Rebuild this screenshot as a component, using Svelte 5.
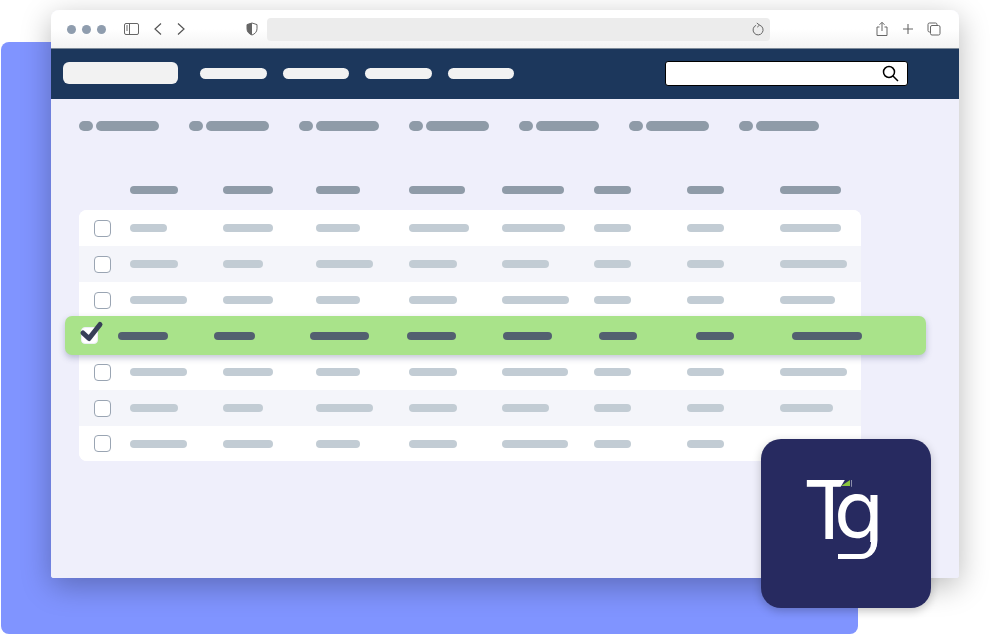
<script lang="ts">
  const navLinks = [0, 1, 2, 3];
  const tabs = [0, 1, 2, 3, 4, 5, 6];

  const headerWidths = [48, 50, 44, 56, 62, 37, 37, 61];

  // bar widths per row, roughly as drawn
  const rows = [
    { kind: 'plain', widths: [37, 50, 44, 60, 63, 37, 37, 61] },
    { kind: 'alt', widths: [48, 40, 57, 48, 47, 37, 37, 67] },
    { kind: 'plain', widths: [57, 50, 44, 48, 67, 37, 37, 55] },
    { kind: 'selected', widths: [50, 41, 59, 49, 49, 38, 38, 70] },
    { kind: 'plain', widths: [57, 50, 44, 48, 66, 37, 37, 67] },
    { kind: 'alt', widths: [48, 40, 57, 48, 47, 37, 37, 53] },
    { kind: 'plain', widths: [57, 50, 44, 48, 66, 37, 37, 60] }
  ];
</script>

<div class="stage">
  <div class="backdrop"></div>

  <div class="browser">
    <div class="toolbar">
      <div class="dots">
        <span></span><span></span><span></span>
      </div>
      <svg class="sidebar-icon" width="15" height="14" viewBox="0 0 15 14" fill="none" stroke="#666" stroke-width="1">
        <rect x="0.500" y="1.500" width="14" height="11" rx="1.500" />
        <path d="M5.500 1.500v11" />
        <path d="M2 4h2M2 6h2M2 8h2" />
      </svg>
      <svg class="nav-icon back" width="10" height="14" viewBox="0 0 10 14" fill="none" stroke="#555" stroke-width="1.200">
        <path d="M8 1.500 2 7l6 5.500" />
      </svg>
      <svg class="nav-icon forward" width="10" height="14" viewBox="0 0 10 14" fill="none" stroke="#555" stroke-width="1.200">
        <path d="M2 1.500 8 7l-6 5.500" />
      </svg>
      <svg class="shield" width="12" height="14" viewBox="0 0 12 14">
        <path d="M6 1 1 2.600v4.200C1 9.900 3.200 12 6 13c2.800-1 5-3.100 5-6.200V2.600z" fill="#fff" stroke="#666" stroke-width="1" />
        <path d="M6 1 1 2.600v4.200C1 9.900 3.200 12 6 13z" fill="#666" />
      </svg>
      <div class="address">
        <svg width="14" height="15" viewBox="0 0 14 15" fill="none" stroke="#666" stroke-width="1">
          <path d="M8.500 3.100a5 5 0 1 1-3.400.2" />
          <path d="M5.800 1 8.500 3.100 6.200 5.200" />
        </svg>
      </div>
      <div class="actions">
        <svg width="14" height="16" viewBox="0 0 14 16" fill="none" stroke="#666" stroke-width="1">
          <path d="M4.500 6H2v8.500h10V6H9.500" />
          <path d="M7 10V1.500M4.500 3.800 7 1.300l2.500 2.500" />
        </svg>
        <svg width="12" height="12" viewBox="0 0 12 12" fill="none" stroke="#666" stroke-width="1.100">
          <path d="M6 1v10M1 6h10" />
        </svg>
        <svg width="14" height="14" viewBox="0 0 14 14" fill="none" stroke="#666" stroke-width="1">
          <path d="M3 10H2.500A1.500 1.500 0 0 1 1 8.500v-6A1.500 1.500 0 0 1 2.500 1h6A1.500 1.500 0 0 1 10 2.500V3" />
          <rect x="3.500" y="3.500" width="9.500" height="9.500" rx="1.500" />
        </svg>
      </div>
    </div>

    <nav class="topnav">
      <div class="brand"></div>
      <div class="links">
        {#each navLinks as link (link)}
          <span class="link"></span>
        {/each}
      </div>
      <div class="search">
        <svg width="17" height="17" viewBox="0 0 17 17" fill="none" stroke="#000" stroke-width="1.500">
          <circle cx="7" cy="7" r="5.500" />
          <path d="m11 11 5 5" />
        </svg>
      </div>
    </nav>

    <main class="content">
      <div class="tabs">
        {#each tabs as tab (tab)}
          <div class="tab"><span class="tab-dot"></span><span class="tab-bar"></span></div>
        {/each}
      </div>

      <div class="table-head">
        {#each headerWidths as w}
          <div class="cell"><span class="bar head-bar" style="width: {w}px"></span></div>
        {/each}
      </div>

      <div class="table">
        {#each rows as row}
          <div class="row {row.kind}">
            <div class="check">
              {#if row.kind === 'selected'}
                <svg class="tick" width="26" height="24" viewBox="0 0 26 24" fill="none" stroke="#373f57" stroke-width="5" stroke-linecap="round" stroke-linejoin="round">
                  <path d="M4 14l6 5.500L21 5.500" />
                </svg>
              {/if}
            </div>
            <div class="cells">
              {#each row.widths as w}
                <div class="cell"><span class="bar" style="width: {w}px"></span></div>
              {/each}
            </div>
          </div>
        {/each}
      </div>
    </main>
  </div>

  <div class="logo">
    <div class="logo-text">Tg</div>
    <span class="logo-tail"></span>
    <span class="logo-notch"></span>
  </div>
</div>

<style>
  :global(body) {
    margin: 0;
    background: #fff;
  }

  .stage {
    position: relative;
    width: 1000px;
    height: 634px;
    overflow: hidden;
  }

  .backdrop {
    position: absolute;
    left: 1px;
    top: 42px;
    width: 857px;
    height: 592px;
    background: #8094ff;
    border-radius: 8px;
    z-index: 0;
  }

  .browser {
    position: absolute;
    left: 51px;
    top: 10px;
    width: 908px;
    height: 568px;
    display: flex;
    flex-direction: column;
    border-radius: 8px 8px 3px 3px;
    overflow: hidden;
    background: #efeffb;
    z-index: 2;
  }

  .stage::before {
    content: '';
    position: absolute;
    left: 51px;
    top: 10px;
    width: 908px;
    height: 568px;
    border-radius: 8px;
    box-shadow: 0 8px 30px rgba(0, 0, 0, 0.28);
    z-index: 1;
  }

  .toolbar {
    height: 39px;
    box-sizing: border-box;
    flex: none;
    display: flex;
    align-items: center;
    background: linear-gradient(#fff 50%, #f3f3f3);
    border-bottom: 1px solid #7d8a99;
  }

  .dots {
    display: flex;
    gap: 6px;
    margin-left: 16px;
  }

  .dots span {
    width: 9px;
    height: 9px;
    border-radius: 50%;
    background: #8f9dae;
  }

  .sidebar-icon { margin-left: 18px; }
  .back { margin-left: 14px; }
  .forward { margin-left: 13px; }
  .shield { margin-left: 60px; }

  .address {
    margin-left: 9px;
    width: 503px;
    height: 23px;
    border-radius: 4px;
    background: #ececec;
    display: flex;
    align-items: center;
    justify-content: flex-end;
    padding-right: 5px;
    box-sizing: border-box;
  }

  .actions {
    display: flex;
    align-items: center;
    gap: 13px;
    margin-left: 105px;
  }

  .topnav {
    height: 50px;
    box-sizing: border-box;
    flex: none;
    display: flex;
    align-items: center;
    background: #1c375c;
    padding: 0 0 2px 12px;
  }

  .brand {
    width: 115px;
    height: 22px;
    border-radius: 6px;
    background: #f2f2f2;
  }

  .links {
    display: flex;
    gap: 16px;
    margin-left: 22px;
  }

  .link {
    width: 66.500px;
    height: 11px;
    border-radius: 6px;
    background: #f2f2f2;
  }

  .search {
    width: 243px;
    height: 25px;
    margin-left: 151px;
    box-sizing: border-box;
    border: 1px solid #000;
    border-radius: 3px;
    background: #fff;
    display: flex;
    align-items: center;
    justify-content: flex-end;
    padding-right: 8px;
  }

  .content {
    flex: 1;
    padding: 22px 0 0 28px;
    background: #efeffb;
  }

  .tabs {
    display: flex;
    gap: 30px;
  }

  .tab {
    display: flex;
    gap: 3.400px;
    width: 80px;
  }

  .tab-dot {
    width: 14px;
    height: 10px;
    border-radius: 5px;
    background: #8f9ba8;
  }

  .tab-bar {
    width: 62.600px;
    height: 10px;
    border-radius: 5px;
    background: #8f9ba8;
  }

  .table-head {
    display: grid;
    grid-template-columns: repeat(8, 92.900px);
    margin: 55px 0 0 51px;
    height: 24px;
  }

  .cell {
    display: flex;
    align-items: center;
    height: 7px;
  }

  .table-head .cell { height: 8px; }

  .bar {
    display: block;
    height: 8px;
    border-radius: 4px;
    background: #c2ccd4;
  }

  .head-bar { background: #8f9ba8; }

  .table {
    width: 782px;
    border-radius: 8px;
    background: #fff;
    position: relative;
  }

  .row {
    height: 36px;
    display: flex;
    align-items: center;
    background: #fff;
    padding-left: 15px;
    box-sizing: border-box;
  }

  .row:first-child { border-radius: 8px 8px 0 0; }
  .row:last-child { border-radius: 0 0 8px 8px; height: 35px; }

  .row.alt { background: #f4f5fa; }

  .row.selected {
    position: relative;
    z-index: 1;
    width: 861px;
    height: 39px;
    margin: -2px 0 -1px -14px;
    padding-left: 16px;
    border-radius: 7px;
    background: #a9e38a;
    box-shadow: 0 3px 6px rgba(60, 70, 120, 0.3);
  }

  .check {
    position: relative;
    flex: none;
    width: 17px;
    height: 17px;
    box-sizing: border-box;
    border: 1.500px solid #9aa5b3;
    border-radius: 4px;
    background: #fff;
  }

  .selected .check {
    border-color: #eceef5;
  }

  .tick {
    position: absolute;
    left: -3px;
    top: -9px;
  }

  .cells {
    display: grid;
    grid-template-columns: repeat(8, 92.900px);
    margin-left: 19px;
  }

  .selected .cells {
    grid-template-columns: repeat(8, 96.400px);
    margin-left: 19.500px;
  }

  .selected .bar { background: #536070; }

  .logo {
    position: absolute;
    left: 761px;
    top: 439px;
    width: 170px;
    height: 169px;
    border-radius: 20px;
    background: #272a60;
    box-shadow: 0 3px 10px rgba(0, 0, 0, 0.22);
    z-index: 3;
  }

  .logo-text {
    padding: 21px 0 0 42px;
    font-family: Inter, sans-serif;
    font-weight: 400;
    font-size: 81px;
    line-height: 100px;
    letter-spacing: -15px;
    color: #fff;
  }

  /* flat tail of the g, covers the font's own descender */
  .logo-tail {
    position: absolute;
    left: 77px;
    top: 103px;
    width: 38.500px;
    height: 17px;
    box-sizing: border-box;
    background: #272a60;
    border-right: 6px solid #fff;
    border-bottom: 5px solid #fff;
    border-bottom-right-radius: 16px;
  }

  .logo-notch {
    position: absolute;
    left: 79px;
    top: 38px;
    width: 11px;
    height: 11px;
    background: #272a60;
    clip-path: polygon(60% 0, 100% 0, 100% 100%, 0 100%);
  }

  .logo-notch::after {
    content: '';
    position: absolute;
    left: 1px;
    top: 3px;
    width: 9px;
    height: 6px;
    background: #8bc53f;
    clip-path: polygon(100% 0, 100% 100%, 0 100%);
  }
</style>
